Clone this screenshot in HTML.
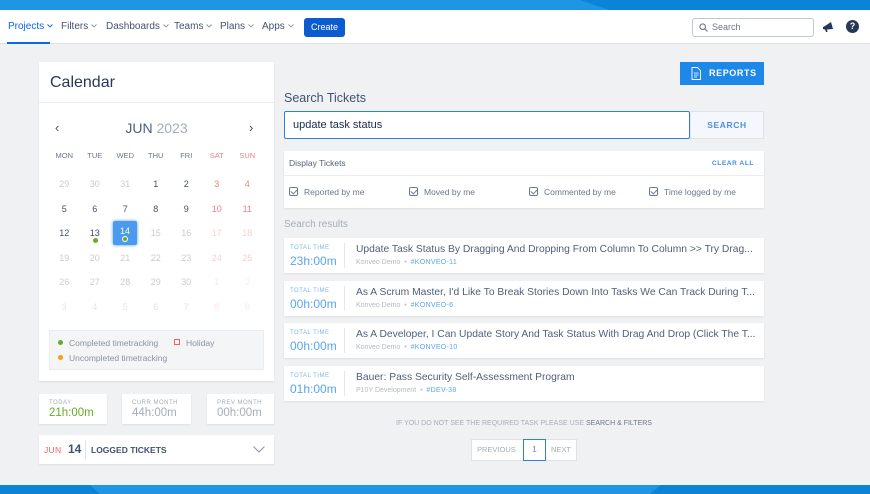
<!DOCTYPE html>
<html><head><style>
*{box-sizing:border-box;margin:0;padding:0}
body{width:870px;height:494px;background:#f0f1f3;font-family:"Liberation Sans",sans-serif;position:relative;overflow:hidden;color:#42526e}
.a{position:absolute}
.top{left:0;top:0;width:870px;height:10px;background:#1e96e4}
.nav{left:0;top:10px;width:870px;height:34px;background:#fff;border-bottom:1px solid #dfe1e6}
.nav span.i{position:absolute;top:11px;font-size:10px;color:#42526e;white-space:nowrap}
.nav span.i svg{margin-left:3px;vertical-align:1px}
.card{background:#fff;box-shadow:0 1px 2px rgba(0,0,0,.08)}
.cal td{width:30.5px;height:24.5px;text-align:center;font-size:9px;color:#42526e;padding:0}
.cal td.g{color:#c8ccd3}.cal td.r{color:#f08080}.cal td.rl{color:#fbd0d0}.cal td.gl{color:#e3e5e8}.cal td.rx{color:#fde8e8}
.cal tr.h td{height:22px;font-size:7.5px;color:#6b778c}
.cal tr.s td{height:6px}
.res{left:284px;width:480px;height:35px}
.res .tt{position:absolute;left:6px;top:7px;font-size:6px;letter-spacing:.5px;color:#7ab8f0}
.res .tv{position:absolute;left:6px;top:16px;font-size:12px;color:#5aa6ee}
.res .sep{position:absolute;left:60px;top:5px;height:25px;border-left:1px solid #e5e7ea}
.res .tl{position:absolute;left:72px;top:6px;font-size:10.3px;color:#505f79;white-space:nowrap}
.res .sb{position:absolute;left:72px;top:21px;font-size:7px;color:#b3b9c4}
.res .sb b{color:#5aa6ee;font-weight:normal;letter-spacing:.3px}
.cb{position:absolute;top:36px;font-size:8.5px;color:#6b778c}
.cb i{display:inline-block;width:9px;height:9px;border:1.3px solid #6b778c;border-radius:2px;vertical-align:-1px;margin-right:6px;position:relative}
.cb i:after{content:"";position:absolute;left:1.5px;top:0;width:3px;height:5px;border:solid #6b778c;border-width:0 1.3px 1.3px 0;transform:rotate(45deg)}
.st{top:394px;height:30px}
.st .l{position:absolute;left:10px;top:6px;font-size:6px;color:#a5adba;letter-spacing:.5px}
.st .v{position:absolute;left:10px;top:13px;font-size:11.5px;color:#a5adba}
</style></head><body>
<div class="a top"></div>
<div class="a" style="left:580px;top:0;width:290px;height:10px;background:#0a84d6;clip-path:polygon(0 0,100% 0,100% 100%,10% 100%)"></div>
<div class="a nav">
<span class="i" style="left:8px;color:#0c66e4">Projects<svg width="6" height="4" viewBox="0 0 6 4"><path d="M.5.5L3 3 5.5.5" fill="none" stroke="#0c66e4" stroke-width=".9"/></svg></span>
<div class="a" style="left:7px;top:32px;width:43px;height:2px;background:#0c66e4"></div>
<span class="i" style="left:61px">Filters<svg width="6" height="4" viewBox="0 0 6 4"><path d="M.5.5L3 3 5.5.5" fill="none" stroke="#8993a4" stroke-width=".9"/></svg></span>
<span class="i" style="left:106px">Dashboards<svg width="6" height="4" viewBox="0 0 6 4"><path d="M.5.5L3 3 5.5.5" fill="none" stroke="#8993a4" stroke-width=".9"/></svg></span>
<span class="i" style="left:174px">Teams<svg width="6" height="4" viewBox="0 0 6 4"><path d="M.5.5L3 3 5.5.5" fill="none" stroke="#8993a4" stroke-width=".9"/></svg></span>
<span class="i" style="left:220px">Plans<svg width="6" height="4" viewBox="0 0 6 4"><path d="M.5.5L3 3 5.5.5" fill="none" stroke="#8993a4" stroke-width=".9"/></svg></span>
<span class="i" style="left:262px">Apps<svg width="6" height="4" viewBox="0 0 6 4"><path d="M.5.5L3 3 5.5.5" fill="none" stroke="#8993a4" stroke-width=".9"/></svg></span>
<div class="a" style="left:304px;top:8px;width:41px;height:19px;background:#0c5ccf;border-radius:3px;color:#fff;font-size:9px;text-align:center;line-height:19px">Create</div>
<div class="a" style="left:692px;top:8px;width:122px;height:19px;border:1px solid #c1c7d0;border-radius:3px;font-size:9px;color:#6b778c;line-height:17px;padding-left:19px">Search
<svg class="a" style="left:6px;top:4px" width="9" height="9" viewBox="0 0 9 9"><circle cx="3.7" cy="3.7" r="2.8" fill="none" stroke="#6b778c" stroke-width="1.1"/><path d="M5.8 5.8L8.5 8.5" stroke="#6b778c" stroke-width="1.1"/></svg></div>
<svg class="a" style="left:822px;top:11px" width="12" height="12" viewBox="0 0 12 12"><path d="M1 6 L3 5 L9 1 L11 8 L5 8.5 L5.5 11 L4 11 L3 8.5 L1 8 Z" fill="#253858"/></svg>
<div class="a" style="left:846px;top:10px;width:13px;height:13px;border-radius:50%;background:#253858;color:#fff;font-size:9px;font-weight:bold;text-align:center;line-height:13px">?</div>
</div>

<!-- calendar -->
<div class="a card" style="left:39px;top:62px;width:235px;height:319px">
<div class="a" style="left:11px;top:12px;font-size:16px;color:#253858">Calendar</div>
<div class="a" style="left:0;top:40px;width:235px;border-top:1px solid #ebecf0"></div>
<div class="a" style="left:16px;top:58px;font-size:13px;color:#42526e">‹</div>
<div class="a" style="left:210px;top:58px;font-size:13px;color:#42526e">›</div>
<div class="a" style="left:0;top:58px;width:235px;text-align:center;font-size:14px;color:#505f79">JUN <span style="color:#a5adba">2023</span></div>
<table class="a cal" style="left:10px;top:82px;border-collapse:collapse">
<tr class="h"><td>MON</td><td>TUE</td><td>WED</td><td>THU</td><td>FRI</td><td style="color:#f08080">SAT</td><td style="color:#f08080">SUN</td></tr>
<tr class="s"><td colspan=7></td></tr>
<tr><td class="g">29</td><td class="g">30</td><td class="g">31</td><td>1</td><td>2</td><td class="r">3</td><td class="r">4</td></tr>
<tr><td>5</td><td>6</td><td>7</td><td>8</td><td>9</td><td class="r">10</td><td class="r">11</td></tr>
<tr><td>12</td><td style="position:relative">13<span class="a" style="left:13px;top:17px;width:5px;height:5px;border-radius:50%;background:#6aaa28"></span></td><td style="position:relative"><span class="a" style="left:3px;top:0;width:24px;height:24px;background:#4c9aef;border-radius:2px;box-shadow:0 0 3px #4c9aef;color:#fff;line-height:20px">14<span class="a" style="left:9px;top:15px;width:6px;height:6px;border-radius:50%;background:#6aaa28;border:1px solid #fff"></span></span></td><td class="g">15</td><td class="g">16</td><td class="rl">17</td><td class="rl">18</td></tr>
<tr><td class="g">19</td><td class="g">20</td><td class="g">21</td><td class="g">22</td><td class="g">23</td><td class="rl">24</td><td class="rl">25</td></tr>
<tr><td class="g">26</td><td class="g">27</td><td class="g">28</td><td class="g">29</td><td class="g">30</td><td class="rx">1</td><td class="rx">2</td></tr>
<tr><td class="gl">3</td><td class="gl">4</td><td class="gl">5</td><td class="gl">6</td><td class="gl">7</td><td class="rx">8</td><td class="rx">9</td></tr>
</table>
<div class="a" style="left:10px;top:268px;width:215px;height:40px;background:#f4f5f7;border:1px solid #ebecf0;font-size:8.5px;color:#8993a4">
<span class="a" style="left:8px;top:9px;width:5px;height:5px;border-radius:50%;background:#6aaa28"></span>
<span class="a" style="left:19px;top:7px">Completed timetracking</span>
<span class="a" style="left:124px;top:8px;width:6px;height:6px;border:1.5px solid #f06060"></span>
<span class="a" style="left:136px;top:7px">Holiday</span>
<span class="a" style="left:8px;top:24px;width:5px;height:5px;border-radius:50%;background:#ff9a1a"></span>
<span class="a" style="left:19px;top:22px">Uncompleted timetracking</span>
</div>
</div>
<div class="a card st" style="left:39px;width:68px"><span class="l">TODAY</span><span class="v" style="color:#6aaa28">21h:00m</span></div>
<div class="a card st" style="left:122px;width:69px"><span class="l">CURR MONTH</span><span class="v">44h:00m</span></div>
<div class="a card st" style="left:207px;width:67px"><span class="l">PREV MONTH</span><span class="v">00h:00m</span></div>
<div class="a card" style="left:39px;top:435px;width:235px;height:29px">
<span class="a" style="left:5px;top:10px;font-size:8.5px;color:#f06060;letter-spacing:.3px">JUN</span>
<span class="a" style="left:29px;top:7px;font-size:12px;font-weight:bold;color:#42526e">14</span>
<span class="a" style="left:46px;top:5px;height:19px;border-left:1px solid #dfe1e6"></span>
<span class="a" style="left:52px;top:10px;font-size:8.5px;font-weight:bold;color:#42526e">LOGGED TICKETS</span>
<svg class="a" style="left:214px;top:11px" width="12" height="7" viewBox="0 0 12 7"><path d="M.5.5L6 6 11.5.5" fill="none" stroke="#8993a4" stroke-width="1"/></svg>
</div>

<!-- right -->
<div class="a" style="left:680px;top:62px;width:84px;height:23px;background:#1e88e8;color:#fff;font-size:9px;font-weight:bold;letter-spacing:.6px;line-height:23px;padding-left:29px">REPORTS
<svg class="a" style="left:11px;top:5px" width="10" height="13" viewBox="0 0 10 13"><path d="M1 .5H6.5L9.5 3.5V12.5H1Z" fill="none" stroke="#fff" stroke-width=".9"/><path d="M3 6H7.5M3 8H7.5M3 10H6" stroke="#fff" stroke-width=".8"/></svg></div>
<div class="a" style="left:284px;top:91px;font-size:12.5px;color:#42526e">Search Tickets</div>
<div class="a" style="left:284px;top:111px;width:406px;height:28px;background:#fff;border:1.5px solid #2f7fe0;border-radius:2px;font-size:11px;color:#172b4d;line-height:27px;padding-left:8px">update task status</div>
<div class="a" style="left:690px;top:111px;width:74px;height:28px;background:#f4f8fd;border:1px solid #dfe4ea;color:#4a90e2;font-size:8.5px;font-weight:bold;letter-spacing:.6px;text-align:center;line-height:26px">SEARCH</div>
<div class="a card" style="left:284px;top:151px;width:480px;height:57px">
<span class="a" style="left:5px;top:7px;font-size:8.5px;color:#505f79">Display Tickets</span>
<span class="a" style="right:10px;top:9px;font-size:6.5px;font-weight:bold;color:#3c8cea;letter-spacing:.6px">CLEAR ALL</span>
<div class="a" style="left:0;top:24px;width:480px;border-top:1px solid #ebecf0"></div>
<span class="cb" style="left:5px"><i></i>Reported by me</span>
<span class="cb" style="left:125px"><i></i>Moved by me</span>
<span class="cb" style="left:245px"><i></i>Commented by me</span>
<span class="cb" style="left:365px"><i></i>Time logged by me</span>
</div>
<div class="a" style="left:284px;top:219px;font-size:10px;color:#a5adba">Search results</div>
<div class="a card res" style="top:238px"><span class="tt">TOTAL TIME</span><span class="tv">23h:00m</span><span class="sep"></span><span class="tl">Update Task Status By Dragging And Dropping From Column To Column &gt;&gt; Try Drag...</span><span class="sb">Konveo Demo &nbsp;•&nbsp; <b>#KONVEO-11</b></span></div>
<div class="a card res" style="top:281px"><span class="tt">TOTAL TIME</span><span class="tv">00h:00m</span><span class="sep"></span><span class="tl">As A Scrum Master, I'd Like To Break Stories Down Into Tasks We Can Track During T...</span><span class="sb">Konveo Demo &nbsp;•&nbsp; <b>#KONVEO-6</b></span></div>
<div class="a card res" style="top:323px"><span class="tt">TOTAL TIME</span><span class="tv">00h:00m</span><span class="sep"></span><span class="tl">As A Developer, I Can Update Story And Task Status With Drag And Drop (Click The T...</span><span class="sb">Konveo Demo &nbsp;•&nbsp; <b>#KONVEO-10</b></span></div>
<div class="a card res" style="top:366px"><span class="tt">TOTAL TIME</span><span class="tv">01h:00m</span><span class="sep"></span><span class="tl">Bauer: Pass Security Self-Assessment Program</span><span class="sb">P10Y Development &nbsp;•&nbsp; <b>#DEV-38</b></span></div>
<div class="a" style="left:284px;top:420px;width:480px;text-align:center;font-size:7px;color:#a5adba">IF YOU DO NOT SEE THE REQUIRED TASK PLEASE USE <span style="color:#6b778c">SEARCH &amp; FILTERS</span></div>
<div class="a" style="left:471px;top:439px;width:106px;height:22px;background:#fff;border:1px solid #dfe1e6;font-size:7.5px;color:#a5adba;line-height:20px">
<span class="a" style="left:5px">PREVIOUS</span>
<span class="a" style="left:51px;top:-1px;width:23px;height:22px;border:1.5px solid #2f7fe0;text-align:center;color:#4a90e2;font-size:8.5px;line-height:19px">1</span>
<span class="a" style="left:79px">NEXT</span>
</div>
<div class="a" style="left:0;top:485px;width:870px;height:9px;background:#1e96e4"></div>
<div class="a" style="left:0;top:485px;width:100px;height:9px;background:#0a84d6;clip-path:polygon(0 0,90% 0,100% 100%,0 100%)"></div>
<div class="a" style="left:650px;top:485px;width:220px;height:9px;background:#0a84d6;clip-path:polygon(5% 0,100% 0,100% 100%,0 100%)"></div>
</body></html>
